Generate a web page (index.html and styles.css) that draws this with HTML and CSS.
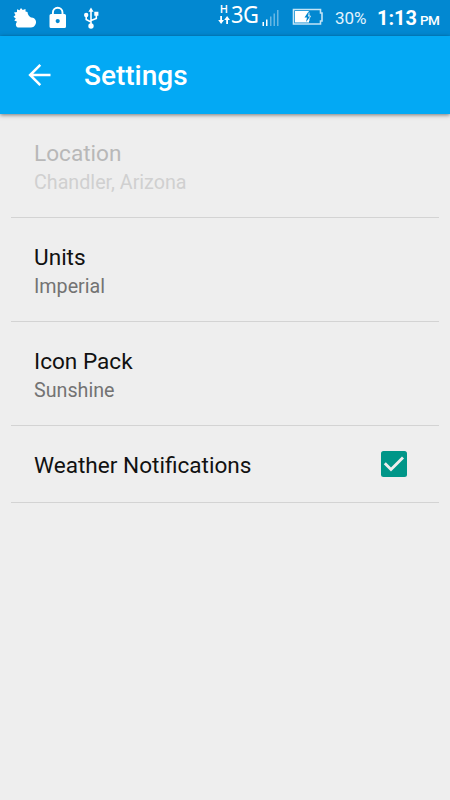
FILE: index.html
```html
<!DOCTYPE html>
<html lang="en">
<head>
<meta charset="utf-8">
<title>Settings</title>
<link rel="stylesheet" href="styles.css">
</head>
<body>
<div class="status">
  <svg class="notices" width="110" height="36" viewBox="0 0 110 36" fill="#fff">
    <path d="M19 27.500C15.500 27.500 15 23.500 17.200 21.700L14.300 20.500L15.800 18.500L13.500 16.800L15.500 15L14 12.500L17 12L17 9.200L19.500 10.300L21 8L22.700 10.100L25.500 9L25.500 11.600L27.500 12C27.500 14 29 16.500 31 17.500C35.500 17.200 37.500 22 35 25.300C34 26.700 32.800 27.500 31 27.500Z"/>
    <path fill-rule="evenodd" d="M51 14H64.500Q66 14 66 15.500V26.500Q66 28 64.500 28H51Q49.500 28 49.500 26.500V15.500Q49.500 14 51 14ZM57.700 19A2.100 2.100 0 1 0 57.700 23.200A2.100 2.100 0 1 0 57.700 19Z"/>
    <path d="M52.900 14.500V12.500A4.800 4.800 0 0 1 62.500 12.500V14.500" fill="none" stroke="#fff" stroke-width="1.900"/>
    <path d="M91 11V25M91 22L86.200 19.500V16M91 20.500L96.300 18.500V14" fill="none" stroke="#fff" stroke-width="1.600"/>
    <path d="M91 7.500L93.600 11.700H88.400ZM94.300 11.800H98.400V15.800H94.300Z"/>
    <circle cx="86.200" cy="15" r="2.200"/><circle cx="91" cy="26" r="2.700"/>
  </svg>
  <div class="signal">
    <div class="data"><span class="h">H</span>
      <svg width="12" height="10" viewBox="0 0 12 10" fill="#fff"><path d="M2.200 1H4V5H6L3.100 9L.2 5H2.200ZM8.200 9H10V5H12L9.100 1L6.200 5H8.200Z"/></svg>
    </div>
    <span class="net">3G</span>
    <svg class="bars" width="18" height="18" viewBox="0 0 18 18" fill="#fff"><path d="M.5 13H2V17H.5ZM4 10.500H5.500V17H4Z"/><path opacity=".4" d="M8 7.500H9.500V17H8ZM11.500 4.500H13V17H11.500ZM15 1H16.500V17H15Z"/></svg>
  </div>
  <svg class="battery" width="31" height="18" viewBox="0 0 31 18"><path d="M1.500 1.500H28.500V5H30V13H28.500V16H1.500Z" fill="none" stroke="#c4e4f6" stroke-width="1.600"/><path d="M3 3H17V14.500H3Z" fill="#fff"/><path d="M16.500 3.500L12.500 9.500H15L14 14L18.500 8.500H16L18 3.500Z" fill="#0288d1"/><path d="M17 4.500V8H18.500L17 11V13" fill="none" stroke="#fff" stroke-width=".8"/></svg>
  <span class="percent">30%</span>
  <span class="time">1:13</span>
  <span class="pm">PM</span>
</div>
<header class="toolbar">
  <svg width="24" height="24" viewBox="0 0 24 24" fill="none" stroke="#fff" stroke-width="2.500"><path d="M23.500 12H3.500M13.300 1.800L3.100 12L13.300 22.200"/></svg>
  <h1>Settings</h1>
</header>
<main>
  <section class="row disabled"><div><div class="title">Location</div><div class="summary">Chandler, Arizona</div></div></section>
  <section class="row"><div><div class="title">Units</div><div class="summary">Imperial</div></div></section>
  <section class="row"><div><div class="title">Icon Pack</div><div class="summary">Sunshine</div></div></section>
  <section class="row single"><div class="title">Weather Notifications</div>
    <svg width="26" height="26" viewBox="0 0 26 26"><rect width="26" height="26" rx="2.500" fill="#009688"/><path d="M3.800 12.300L10 18.500L22 6.500" fill="none" stroke="#eee" stroke-width="2.900"/></svg>
  </section>
</main>
</body>
</html>
```
FILE: styles.css
```css
* { box-sizing: border-box; }
body { margin: 0; min-height: 800px; background: #eee; font-family: Roboto, "Liberation Sans", sans-serif; }
svg { display: block; flex: none; }
.status { height: 36px; display: flex; background: #0288d1; color: #fff; line-height: 36px; white-space: nowrap; }
.signal { display: flex; margin-left: 108px; width: 62px; }
.data { flex: none; width: 13px; padding-top: 3px; }
.h { display: block; width: 12px; text-align: center; font: 600 11px/12px "Open Sans", sans-serif; }
.net { flex: none; width: 34px; margin-right: -5px; font: 24px/27px "Noto Sans", "Open Sans", sans-serif; letter-spacing: -.5px; transform: scaleX(.91); transform-origin: left; }
.bars { margin: 9px 0 0 2px; }
.battery { margin: 8px 0 0 12px; }
.percent { margin-left: 12px; width: 42px; font-size: 17px; line-height: 37px; color: #e1f3fd; }
.time { width: 43px; font-size: 20px; font-weight: 700; line-height: 37px; }
.pm { font-size: 13.5px; font-weight: 500; line-height: 41px; letter-spacing: -.5px; }
.toolbar { height: 78px; padding-left: 27px; display: flex; align-items: center; background: #03a9f4; box-shadow: 0 1px 4px rgba(0,0,0,.5); }
.toolbar h1 { margin: 1px 0 0 33px; color: #fff; font-size: 28px; line-height: 32px; font-weight: 500; }
main { padding: 0 11px; }
.row { height: 104px; padding: 25px 32px 0 23px; border-bottom: 1px solid #d3d3d3; }
.title { font-size: 22.6px; line-height: 30px; color: #111; }
.summary { font-size: 19.7px; line-height: 28px; color: #737373; }
.disabled .title { color: #b8b8b8; }
.disabled .summary { color: #d0d0d0; }
.single { height: 77px; display: flex; justify-content: space-between; }
```
